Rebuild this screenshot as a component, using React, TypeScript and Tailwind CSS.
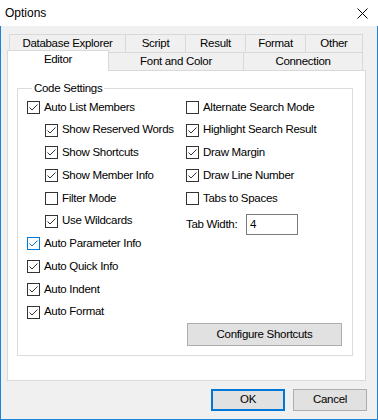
import React from "react";

const Box = ({ checked, blue }: { checked?: boolean; blue?: boolean }) => (
  <div
    className={
      "w-[13px] h-[13px] shrink-0 border bg-white flex items-center justify-center " +
      (blue ? "border-[#0078d7]" : "border-[#333333]")
    }
  >
    {checked && (
      <svg width="11" height="11" viewBox="0 0 11 11">
        <polyline
          points="1.5,5.5 4,8 9.5,2.5"
          fill="none"
          stroke={blue ? "#0078d7" : "#333333"}
          strokeWidth="1"
        />
      </svg>
    )}
  </div>
);

const Row = ({
  label,
  checked,
  indent,
  blue,
}: {
  label: string;
  checked?: boolean;
  indent?: boolean;
  blue?: boolean;
}) => (
  <div className={"flex items-center h-[22.75px] " + (indent ? "pl-[18px]" : "")}>
    <Box checked={checked} blue={blue} />
    <span className="ml-[4px] leading-none whitespace-nowrap">{label}</span>
  </div>
);

const Tab = ({ label, w, last }: { label: string; w: string; last?: boolean }) => (
  <div
    className={
      "h-[18px] border-t border-l border-[#d9d9d9] bg-[#f0f0f0] flex items-center justify-center leading-none " +
      w +
      (last ? " border-r" : "")
    }
  >
    {label}
  </div>
);

export default function App() {
  return (
    <div className="w-[378px] h-[420px] flex flex-col font-['Liberation_Sans',Arial,sans-serif] text-[11.5px] tracking-[-0.3px] text-black select-none">
      <div className="h-[26px] bg-white flex items-center justify-between pl-[5px] pr-[10px] shrink-0">
        <span className="leading-none text-[12px] tracking-normal">Options</span>
        <svg width="11" height="11" viewBox="0 0 11 11">
          <path d="M0.5 0.5 L10.5 10.5 M10.5 0.5 L0.5 10.5" stroke="#000" strokeWidth="1" />
        </svg>
      </div>
      <div className="flex-1 bg-[#f0f0f0] border-x border-b border-[#1883d7] flex flex-col pt-[8px]">
        <div className="flex ml-[8px]">
          <Tab label="Database Explorer" w="w-[116px]" />
          <Tab label="Script" w="w-[60px]" />
          <Tab label="Result" w="w-[60px]" />
          <Tab label="Format" w="w-[60px]" />
          <Tab label="Other" w="w-[58px]" last />
        </div>
        <div className="flex ml-[6px] h-[18px] items-start">
          <div className="relative z-10 -mt-[2px] h-[21px] w-[102px] bg-white border-x border-t border-[#d9d9d9] flex items-center justify-center leading-none pb-[2px]">
            Editor
          </div>
          <div className="h-[18px] w-[135px] border-t border-r border-[#d9d9d9] bg-[#f0f0f0] flex items-center justify-center leading-none">
            Font and Color
          </div>
          <div className="h-[18px] w-[119px] border-t border-r border-[#d9d9d9] bg-[#f0f0f0] flex items-center justify-center leading-none">
            Connection
          </div>
        </div>
        <div className="ml-[6px] w-[359px] h-[311px] bg-white border border-[#d9d9d9] pt-[10px] pl-[9px]">
          <fieldset className="w-[336px] border border-[#dcdcdc] pl-[9px] pb-[9px] pr-[9px]">
            <legend className="ml-[5px] px-[2px] leading-[14px]">Code Settings</legend>
            <div className="flex h-[251px] pt-[1px]">
              <div className="w-[159px] flex flex-col">
                <Row label="Auto List Members" checked />
                <Row label="Show Reserved Words" checked indent />
                <Row label="Show Shortcuts" checked indent />
                <Row label="Show Member Info" checked indent />
                <Row label="Filter Mode" indent />
                <Row label="Use Wildcards" checked indent />
                <Row label="Auto Parameter Info" checked blue />
                <Row label="Auto Quick Info" checked />
                <Row label="Auto Indent" checked />
                <Row label="Auto Format" checked />
              </div>
              <div className="flex-1 flex flex-col">
                <Row label="Alternate Search Mode" />
                <Row label="Highlight Search Result" checked />
                <Row label="Draw Margin" checked />
                <Row label="Draw Line Number" checked />
                <Row label="Tabs to Spaces" />
                <div className="flex items-center mt-[4px]">
                  <span className="leading-none w-[60px]">Tab Width:</span>
                  <div className="w-[52px] h-[21px] border border-[#7a7a7a] bg-white flex items-center pl-[3px] leading-none">
                    4
                  </div>
                </div>
                <div className="mt-auto ml-[1px] w-[155px] h-[23px] bg-[#e1e1e1] border border-[#adadad] flex items-center justify-center leading-none">
                  Configure Shortcuts
                </div>
              </div>
            </div>
          </fieldset>
        </div>
        <div className="flex justify-end gap-[8px] pr-[10px] mt-[8px]">
          <div className="w-[74px] h-[22px] bg-[#e1e1e1] border-2 border-[#0078d7] flex items-center justify-center leading-none">
            OK
          </div>
          <div className="w-[74px] h-[22px] bg-[#e1e1e1] border border-[#adadad] flex items-center justify-center leading-none">
            Cancel
          </div>
        </div>
      </div>
    </div>
  );
}
